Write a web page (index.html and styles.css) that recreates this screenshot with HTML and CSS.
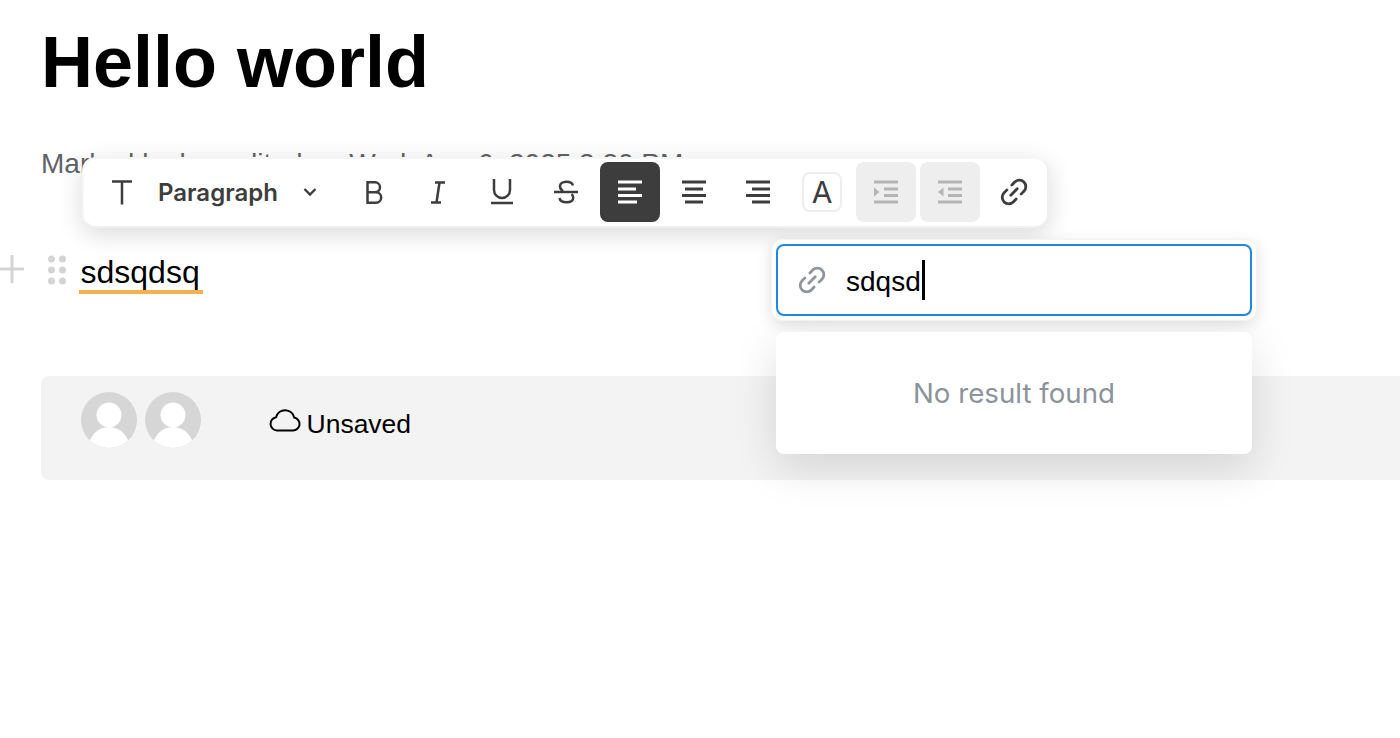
FILE: index.html
```html
<!DOCTYPE html>
<html lang="en">
<head>
<meta charset="utf-8">
<title>Hello world</title>
<link rel="stylesheet" href="styles.css">
</head>
<body>
<main class="page">
  <h1 class="title">Hello world</h1>
  <p class="meta">Marked by bo, edited on Wed, Aug 6, 2025 3:30 PM</p>
  <div class="block">
    <svg class="plus" viewBox="0 0 24 32" width="24" height="32"><path d="M0 16h24M12 2v28" stroke="#d4d4d4" stroke-width="3" fill="none"/></svg>
    <svg class="drag" viewBox="0 0 18 30" width="18" height="30"><g fill="#d4d4d4"><circle cx="3.5" cy="4" r="3.500"/><circle cx="14.500" cy="4" r="3.500"/><circle cx="3.500" cy="15" r="3.500"/><circle cx="14.500" cy="15" r="3.500"/><circle cx="3.500" cy="26" r="3.500"/><circle cx="14.500" cy="26" r="3.500"/></g></svg>
    <span class="block-text">sdsqdsq</span>
  </div>
  <footer class="status">
    <div class="avatars">
      <svg class="avatar" viewBox="0 0 56 56"><defs><clipPath id="c1"><circle cx="28" cy="28" r="28"/></clipPath></defs><circle cx="28" cy="28" r="28" fill="#d6d6d6"/><g clip-path="url(#c1)" fill="#fff"><circle cx="28" cy="23" r="12.500"/><ellipse cx="28" cy="56" rx="20.500" ry="21"/></g></svg>
      <svg class="avatar" viewBox="0 0 56 56"><defs><clipPath id="c2"><circle cx="28" cy="28" r="28"/></clipPath></defs><circle cx="28" cy="28" r="28" fill="#d6d6d6"/><g clip-path="url(#c2)" fill="#fff"><circle cx="28" cy="23" r="12.500"/><ellipse cx="28" cy="56" rx="20.500" ry="21"/></g></svg>
    </div>
    <div class="save">
      <svg class="cloud" viewBox="0 0 32 24" width="32" height="24"><path d="M8 22.500h16a6.500 6.500 0 0 0 1.200-12.900A9.300 9.300 0 0 0 7.100 9.200 6.700 6.700 0 0 0 8 22.500z" fill="none" stroke="#000" stroke-width="2"/></svg>
      <span>Unsaved</span>
    </div>
  </footer>
</main>

<div class="toolbar">
  <button class="tb"><svg viewBox="0 0 24 26" width="24" height="26"><path d="M2 2.500h20M12 2.500v23" stroke="#3d3d3d" stroke-width="2.500" fill="none"/></svg></button>
  <div class="select"><span class="select-label">Paragraph</span><svg viewBox="0 0 14 10" width="14" height="10"><path d="M1.500 2l5.500 5.500L12.500 2" stroke="#3d3d3d" stroke-width="2.400" fill="none"/></svg></div>
  <button class="tb"><svg viewBox="0 0 24 26" width="24" height="26"><path d="M5.500 3.300h7.500a5 5 0 0 1 0 10H5.500h8.500a5.200 5.200 0 0 1 0 10.400H5.500z" stroke="#3d3d3d" stroke-width="2.500" fill="none"/></svg></button>
  <button class="tb"><svg viewBox="0 0 24 26" width="24" height="26"><path d="M9 3.500h10M5 23.500h10M13.500 3.500L10.500 23.500" stroke="#3d3d3d" stroke-width="2.500" fill="none"/></svg></button>
  <button class="tb"><svg viewBox="0 0 24 26" width="24" height="26"><path d="M4 0v11a8 8 0 0 0 16 0V0" stroke="#3d3d3d" stroke-width="2.500" fill="none"/><path d="M1 24h22" stroke="#3d3d3d" stroke-width="2.500" fill="none"/></svg></button>
  <button class="tb"><svg viewBox="0 0 24 26" width="24" height="26"><path d="M0 13h24" stroke="#3d3d3d" stroke-width="2.500"/><path d="M19 6.500C18.500 4 16 2.800 12.500 2.800 8.500 2.800 6 4.700 6 7.300c0 2.200 1.200 3.700 3 5M5.500 19c.5 2.800 3 4.300 7 4.300s6.700-1.700 6.700-4.500c0-1.500-.5-2.700-1.500-3.800" stroke="#3d3d3d" stroke-width="2.500" fill="none"/></svg></button>
  <button class="tb tb-active"><svg viewBox="0 0 24 24" width="24" height="24"><path d="M0 2h24M0 9h18M0 15.500h24M0 22h19" stroke="#fff" stroke-width="3"/></svg></button>
  <button class="tb"><svg viewBox="0 0 24 24" width="24" height="24"><path d="M0 2h24M3 9h18M0 15.500h24M3 22h18" stroke="#3d3d3d" stroke-width="3"/></svg></button>
  <button class="tb"><svg viewBox="0 0 24 24" width="24" height="24"><path d="M0 2h24M6 9h18M0 15.500h24M6 22h18" stroke="#3d3d3d" stroke-width="3"/></svg></button>
  <button class="tb"><span class="color-a">A</span></button>
  <button class="tb tb-disabled"><svg viewBox="0 0 24 24" width="24" height="24"><path d="M0 2h24M10 9h14M10 15.500h14M0 22h24" stroke="#b5b5b5" stroke-width="3"/><path d="M0 7.500l5.500 4.500L0 16.500z" fill="#b5b5b5"/></svg></button>
  <button class="tb tb-disabled"><svg viewBox="0 0 24 24" width="24" height="24"><path d="M0 2h24M10 9h14M10 15.500h14M0 22h24" stroke="#b5b5b5" stroke-width="3"/><path d="M5.500 7.500L0 12l5.500 4.500z" fill="#b5b5b5"/></svg></button>
  <button class="tb"><svg viewBox="-14 -14 28 28" width="28" height="28"><g transform="rotate(-45)" fill="none" stroke="#3d3d3d" stroke-width="2.800" stroke-linecap="round"><path d="M-3.500-6.500H-7.500a6.500 6.500 0 0 0 0 13h4"/><path d="M3.500-6.500H7.500a6.500 6.500 0 0 1 0 13h-4"/><path d="M-4.500 0H4.500"/></g></svg></button>
</div>

<div class="link-box">
  <div class="link-input">
    <svg viewBox="-14 -14 28 28" width="28" height="28"><g transform="rotate(-45)" fill="none" stroke="#8f969c" stroke-width="2.800" stroke-linecap="round"><path d="M-3.500-6.500H-7.500a6.500 6.500 0 0 0 0 13h4"/><path d="M3.500-6.500H7.500a6.500 6.500 0 0 1 0 13h-4"/><path d="M-4.500 0H4.500"/></g></svg>
    <span class="link-value">sdqsd</span><span class="caret"></span>
  </div>
</div>
<div class="link-results">No result found</div>
</body>
</html>
```
FILE: styles.css
```css
* { box-sizing: border-box; }
html, body { margin: 0; height: 100%; background: #fff; overflow: hidden; }
body { font-family: "Liberation Sans", Arial, sans-serif; color: #000; position: relative; }
.page { padding-left: 41px; width: 1400px; overflow: hidden; }
.title { margin: 0; padding-top: 20px; font-size: 72px; line-height: 85px; font-weight: 700; }
.meta { margin: 43px 0 0; font-size: 28px; line-height: 32px; color: #5f6368; white-space: nowrap; }
.block { display: flex; align-items: flex-start; margin-top: 74px; margin-left: -41px; height: 122px; }
.plus { flex: none; margin-top: -1px; }
.drag { margin: 1px 0 0 24px; flex: none; }
.block-text { margin: 0 0 0 13px; font-size: 32px; line-height: 37px; padding: 0 3px 0 1.500px; border-bottom: 4px solid #f4b24f; height: 40px; }
.status { display: flex; align-items: flex-start; height: 104px; width: 1400px; background: #f3f3f3; border-radius: 8px; padding: 16px 0 0 40px; }
.avatars { display: flex; gap: 8px; }
.avatar { width: 56px; height: 56px; display: block; }
.save { display: flex; align-items: center; gap: 6px; margin-left: 68px; font-size: 26.500px; line-height: 30px; padding-top: 17px; }
.cloud { margin-top: -8px; margin-left: -.5px; }
.toolbar { position: absolute; left: 82px; top: 157px; width: 967px; height: 71px; display: flex; align-items: center; gap: 4px; padding: 0 3px 1px 8px; background: #fff; border: 2px solid #f0f0f0; border-top-color: #f6f6f6; border-left-color: #f6f6f6; border-radius: 14px; box-shadow: 0 6px 24px rgba(0,0,0,.15); }
.tb { flex: none; width: 60px; height: 60px; padding: 0; border: 0; background: none; border-radius: 8px; display: flex; align-items: center; justify-content: center; }
.tb-active { background: #3d3d3d; }
.tb-disabled { background: #eeeeee; }
.select { flex: none; width: 184px; height: 60px; display: flex; align-items: center; }
.select-label { font-family: Inter, sans-serif; font-size: 24px; font-weight: 600; color: #3d3d3d; width: 147px; padding-left: 2px; }
.color-a { width: 40px; height: 40px; border: 2px solid #eeeeee; border-radius: 8px; font-family: Inter, sans-serif; font-size: 30px; line-height: 36px; color: #3d3d3d; text-align: center; }
.link-box { position: absolute; left: 772px; top: 240px; width: 484px; height: 80px; padding: 4px; background: #fff; border-radius: 10px; box-shadow: 0 0 0 1px #f4f4f4, 0 4px 16px rgba(0,0,0,.14); }
.link-input { height: 72px; border: 2px solid #1e88e5; border-radius: 8px; display: flex; align-items: center; padding-left: 20px; }
.link-value { margin-left: 20px; padding-top: 3px; font-size: 28px; color: #000; }
.caret { width: 3px; height: 40px; background: #000; margin-left: 1px; }
.link-results { position: absolute; left: 776px; top: 332px; width: 476px; height: 122px; background: #fff; border-radius: 8px; box-shadow: 0 14px 44px rgba(0,0,0,.13); font-family: Inter, sans-serif; font-size: 27.700px; line-height: 122px; color: #8c939a; text-align: center; }
```
